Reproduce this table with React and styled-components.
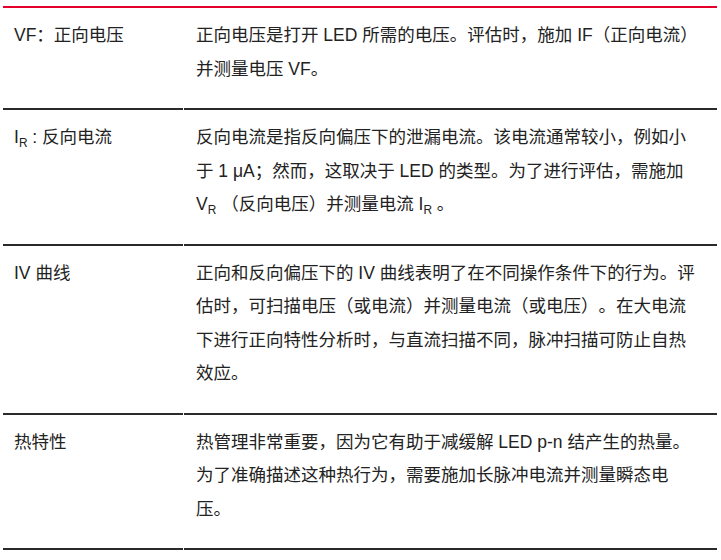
import React from "react";
import styled, { createGlobalStyle } from "styled-components";

const GlobalStyle = createGlobalStyle`
  body {
    margin: 0;
    background: #fff;
  }
`;

const Page = styled.div`
  padding: 6px 0 0 3px;
  font-family: "Liberation Sans", "Noto Sans CJK SC", sans-serif;
  font-size: 17.5px;
  color: #222;
  text-spacing-trim: space-all;
`;

const Table = styled.div`
  width: 714px;
  display: grid;
  grid-template-columns: 180px 1fr;
  column-gap: 1px;
  border-top: 2px solid #e4002b;
`;

const Cell = styled.div`
  padding: 11px ${(p) => (p.wide ? "16px" : "8px")} 22px
    ${(p) => (p.wide ? "12px" : "11px")};
  line-height: 33.5px;
  border-bottom: 2px solid #2a2a2a;
`;

const Sub = styled.sub`
  font-size: 0.68em;
  line-height: 0;
  vertical-align: -0.35em;
`;

const rows = [
  {
    name: "VF：正向电压",
    text: "正向电压是打开 LED 所需的电压。评估时，施加 IF（正向电流）并测量电压 VF。",
  },
  {
    name: (
      <>
        I<Sub>R</Sub> : 反向电流
      </>
    ),
    text: (
      <>
        反向电流是指反向偏压下的泄漏电流。该电流通常较小，例如小于 1
        μA；然而，这取决于 LED 的类型。为了进行评估，需施加 V<Sub>R</Sub>{" "}
        （反向电压）并测量电流 I<Sub>R</Sub> 。
      </>
    ),
  },
  {
    name: "IV 曲线",
    text: "正向和反向偏压下的 IV 曲线表明了在不同操作条件下的行为。评估时，可扫描电压（或电流）并测量电流（或电压）。在大电流下进行正向特性分析时，与直流扫描不同，脉冲扫描可防止自热效应。",
  },
  {
    name: "热特性",
    text: "热管理非常重要，因为它有助于减缓解 LED p-n 结产生的热量。为了准确描述这种热行为，需要施加长脉冲电流并测量瞬态电压。",
  },
];

export default function App() {
  return (
    <>
      <GlobalStyle />
      <Page>
        <Table>
          {rows.map((row, i) => (
            <React.Fragment key={i}>
              <Cell>{row.name}</Cell>
              <Cell wide>{row.text}</Cell>
            </React.Fragment>
          ))}
        </Table>
      </Page>
    </>
  );
}
